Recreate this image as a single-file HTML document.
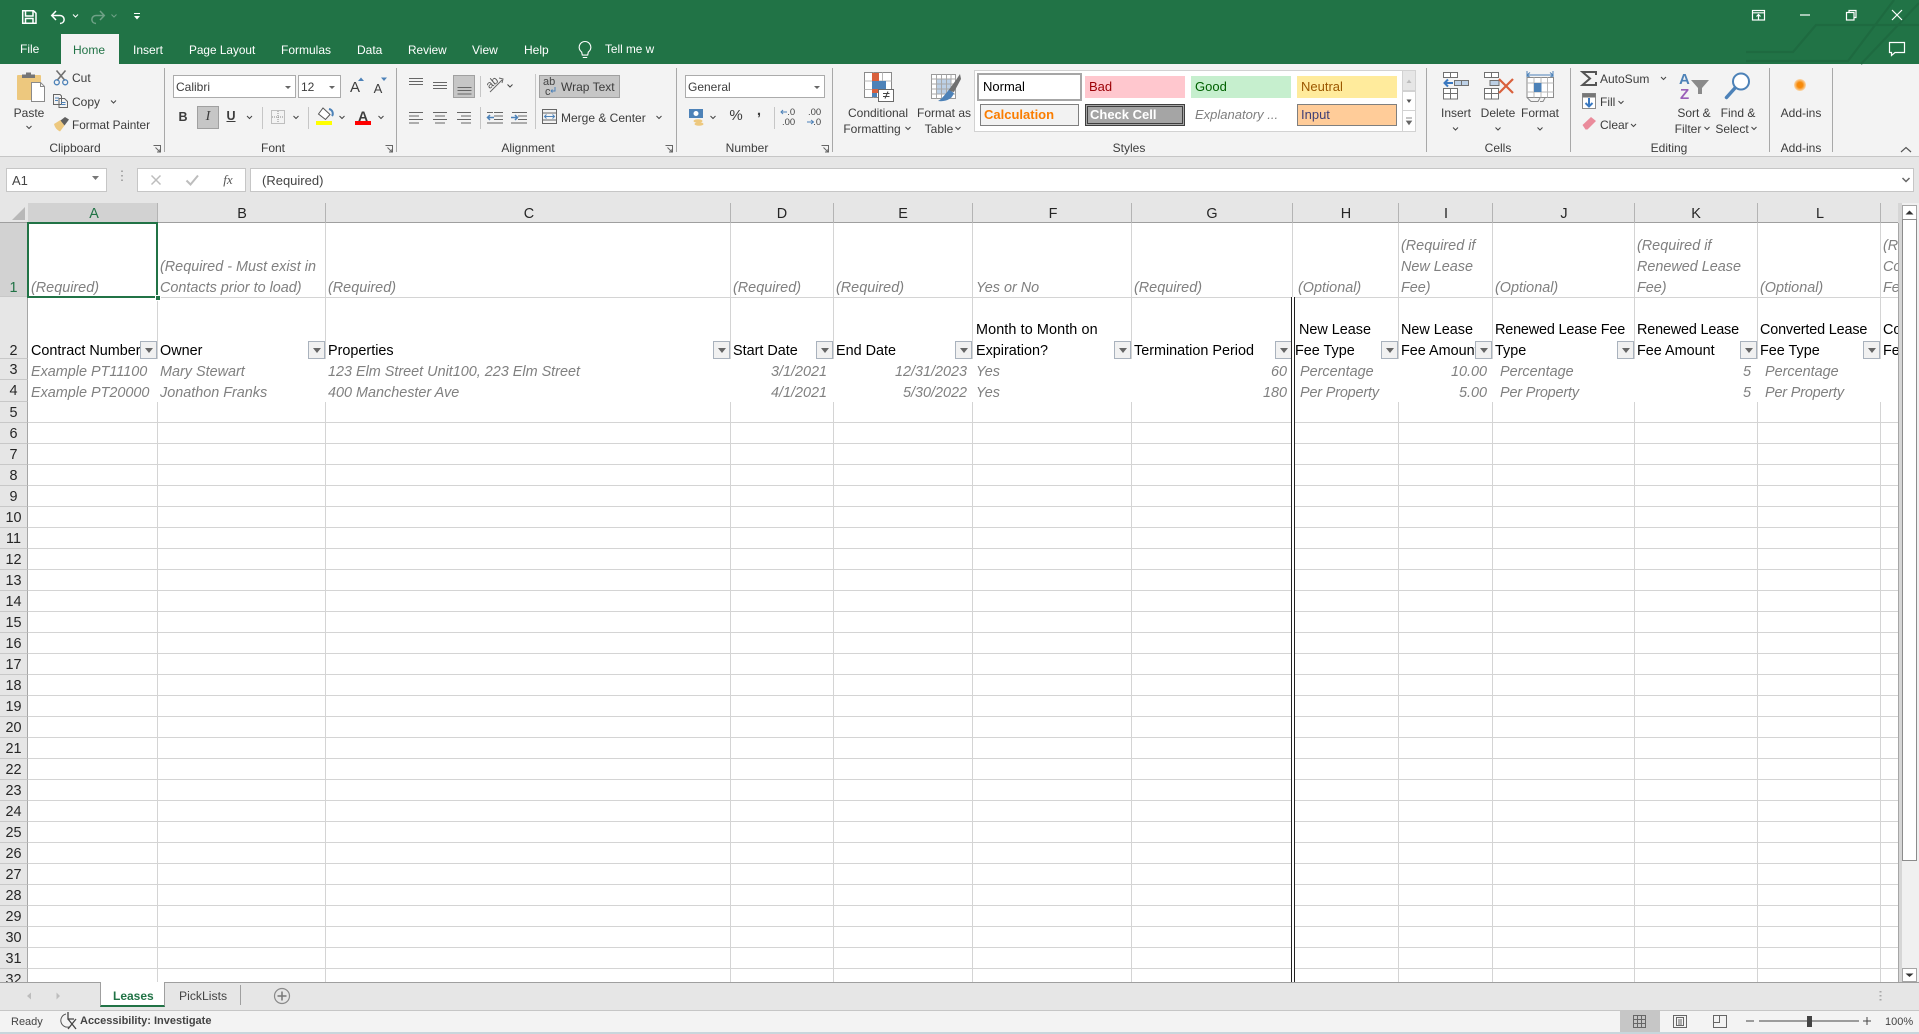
<!DOCTYPE html>
<html><head><meta charset="utf-8"><title>Leases</title>
<style>
html,body{margin:0;padding:0;width:1919px;height:1034px;overflow:hidden;background:#fff;font-family:"Liberation Sans",sans-serif}
div{position:absolute;box-sizing:border-box}
.t{position:absolute;white-space:nowrap;font-size:12px;line-height:16px;color:#3c3c3c}
.cc{transform:translateX(-50%)}
.w{color:#fff}
.g{position:absolute;white-space:nowrap;font-size:14.4px;line-height:20px;color:#808080;font-style:italic}
.k{position:absolute;white-space:nowrap;font-size:14.4px;line-height:20px;color:#000}
.n{letter-spacing:-.16px}
.ch{position:absolute;top:203px;margin-left:1px;height:20px;font-size:14.4px;line-height:20px;color:#262626;transform:translateX(-50%)}
.rn{left:0;width:28px;text-align:center;font-size:14.4px;line-height:23px;height:21px;color:#262626;background:#e6e6e6;border-bottom:1px solid #c8c8c8;border-right:1px solid #a6a6a6;overflow:hidden}
.v{width:1px;background:#d4d4d4;top:223px;height:759px}
.hs{width:1px;background:#b4b4b4;top:203px;height:20px}
.f{width:17px;height:18px;top:341px;background:#f1f1f1;border:1px solid #a9b2bd}
.f:after{content:"";position:absolute;left:4px;top:6px;border:4px solid transparent;border-top:5px solid #666;border-bottom:0}
.sep{width:1px;background:#a8a8a8;top:68px;height:84px}
.st{font-size:13px;line-height:22px;white-space:nowrap;padding-left:7px}
</style></head><body>

<!-- title bar -->
<div style="left:0;top:0;width:1919px;height:64px;background:#217346"></div>
<div style="left:61px;top:34px;width:58px;height:30px;background:#f3f3f3"></div>
<span class="t w" style="left:20px;top:41px">File</span>
<span class="t" style="left:73px;top:42px;color:#217346">Home</span>
<span class="t w" style="left:133px;top:42px">Insert</span>
<span class="t w" style="left:189px;top:42px;font-size:11.8px">Page Layout</span>
<span class="t w" style="left:281px;top:42px">Formulas</span>
<span class="t w" style="left:357px;top:42px">Data</span>
<span class="t w" style="left:408px;top:42px;font-size:11.8px">Review</span>
<span class="t w" style="left:472px;top:42px">View</span>
<span class="t w" style="left:524px;top:42px">Help</span>
<span class="t w" style="left:605px;top:41px;font-size:11.8px">Tell me w</span>

<!-- ribbon -->
<div style="left:0;top:64px;width:1919px;height:93px;background:#f3f3f3;border-bottom:1px solid #c6c6c6"></div>
<div class="sep" style="left:164px"></div><div class="sep" style="left:396px"></div><div class="sep" style="left:676px"></div><div class="sep" style="left:832px"></div><div class="sep" style="left:1426px"></div><div class="sep" style="left:1570px"></div><div class="sep" style="left:1769px"></div><div class="sep" style="left:1832px"></div>
<span class="t cc" style="left:75px;top:140px">Clipboard</span>
<span class="t cc" style="left:273px;top:140px">Font</span>
<span class="t cc" style="left:528px;top:140px">Alignment</span>
<span class="t cc" style="left:747px;top:140px">Number</span>
<span class="t cc" style="left:1129px;top:140px">Styles</span>
<span class="t cc" style="left:1498px;top:140px">Cells</span>
<span class="t cc" style="left:1669px;top:140px">Editing</span>
<span class="t cc" style="left:1801px;top:140px">Add-ins</span>

<span class="t cc" style="left:29px;top:105px">Paste</span>
<span class="t" style="left:72px;top:70px">Cut</span>
<span class="t" style="left:72px;top:94px">Copy</span>
<span class="t" style="left:72px;top:117px;font-size:11.8px">Format Painter</span>

<div style="left:173px;top:75px;width:123px;height:23px;background:#fff;border:1px solid #ababab"></div>
<span class="t" style="left:176px;top:79px">Calibri</span>
<div style="left:298px;top:75px;width:43px;height:23px;background:#fff;border:1px solid #ababab"></div>
<span class="t" style="left:301px;top:79px">12</span>
<div style="left:197px;top:106px;width:22px;height:23px;background:#c6c6c6;border:1px solid #a0a0a0"></div>
<span class="t cc" style="left:183px;top:109px;font-weight:bold;font-size:12.5px">B</span>
<span class="t cc" style="left:208px;top:109px;font-style:italic;font-family:'Liberation Serif',serif;font-size:14px">I</span>
<span class="t cc" style="left:231px;top:108px;text-decoration:underline;font-weight:bold;font-size:12.5px">U</span>
<span class="t cc" style="left:355px;top:80px;font-size:15px">A</span>
<span class="t cc" style="left:378px;top:81px;font-size:13px">A</span>
<span class="t cc" style="left:363px;top:108px;font-size:14px;font-weight:bold">A</span>

<div style="left:453px;top:75px;width:22px;height:23px;background:#c6c6c6;border:1px solid #a0a0a0"></div>
<div style="left:539px;top:75px;width:81px;height:23px;background:#c6c6c6;border:1px solid #a0a0a0"></div>
<span class="t" style="left:561px;top:79px">Wrap Text</span>
<span class="t" style="left:561px;top:110px;font-size:12px">Merge &amp; Center</span>
<span class="t" style="left:543px;top:77px;font-size:11px;line-height:10px;color:#444">ab</span>
<span class="t" style="left:545px;top:87px;font-size:11px;line-height:10px;color:#444">c</span>

<div style="left:685px;top:75px;width:140px;height:23px;background:#fff;border:1px solid #ababab"></div>
<span class="t" style="left:688px;top:79px">General</span>
<span class="t cc" style="left:736px;top:108px;font-size:15px">%</span>
<span class="t cc" style="left:759px;top:103px;font-size:15px;font-weight:bold">,</span>
<span class="t" style="left:782px;top:108px;font-size:9.5px;line-height:10px;color:#444">&nbsp;&nbsp;.0<br>.00</span>
<span class="t" style="left:808px;top:108px;font-size:9.5px;line-height:10px;color:#444">.00<br>&nbsp;&nbsp;.0</span>

<span class="t cc" style="left:878px;top:105px">Conditional</span>
<span class="t cc" style="left:872px;top:121px">Formatting</span>
<span class="t cc" style="left:944px;top:105px">Format as</span>
<span class="t cc" style="left:939px;top:121px">Table</span>

<!-- styles gallery -->
<div style="left:974px;top:70px;width:442px;height:62px;background:#fff;border:1px solid #d2d2d2"></div>
<div class="st" style="left:977px;top:73px;width:105px;height:28px;border:2px solid #a6a6a6;background:#fff;color:#000;line-height:23px;padding-left:4px">Normal</div>
<div class="st" style="left:1085px;top:76px;width:100px;height:22px;background:#ffc7ce;color:#9c0006;padding-left:4px">Bad</div>
<div class="st" style="left:1191px;top:76px;width:100px;height:22px;background:#c6efce;color:#006100;padding-left:4px">Good</div>
<div class="st" style="left:1297px;top:76px;width:100px;height:22px;background:#ffeb9c;color:#9c5700;padding-left:4px">Neutral</div>
<div class="st" style="left:980px;top:104px;width:99px;height:22px;background:#f2f2f2;border:1px solid #7f7f7f;color:#fa7d00;font-weight:bold;padding-left:3px;line-height:20px">Calculation</div>
<div class="st" style="left:1085px;top:104px;width:100px;height:22px;background:#a5a5a5;border:3px double #3f3f3f;color:#fff;font-weight:bold;padding-left:2px;line-height:16px">Check Cell</div>
<div class="st" style="left:1191px;top:104px;width:100px;height:22px;color:#7f7f7f;font-style:italic;padding-left:4px">Explanatory ...</div>
<div class="st" style="left:1297px;top:104px;width:100px;height:22px;background:#fc9;border:1px solid #7f7f7f;color:#3f3f76;padding-left:3px;line-height:20px">Input</div>
<div style="left:1402px;top:70px;width:14px;height:21px;background:#e6e6e6;border:1px solid #d2d2d2"></div>
<div style="left:1402px;top:91px;width:14px;height:20px;background:#fff;border:1px solid #d2d2d2"></div>
<div style="left:1402px;top:110px;width:14px;height:22px;background:#fff;border:1px solid #d2d2d2"></div>

<span class="t cc" style="left:1456px;top:105px">Insert</span>
<span class="t cc" style="left:1498px;top:105px">Delete</span>
<span class="t cc" style="left:1540px;top:105px">Format</span>
<span class="t" style="left:1600px;top:71px">AutoSum</span>
<span class="t" style="left:1600px;top:94px">Fill</span>
<span class="t" style="left:1600px;top:117px">Clear</span>
<span class="t cc" style="left:1694px;top:105px">Sort &amp;</span>
<span class="t cc" style="left:1688px;top:121px">Filter</span>
<span class="t cc" style="left:1738px;top:105px">Find &amp;</span>
<span class="t cc" style="left:1732px;top:121px">Select</span>
<span class="t cc" style="left:1801px;top:105px">Add-ins</span>

<!-- formula bar -->
<div style="left:0;top:157px;width:1919px;height:46px;background:#e6e6e6"></div>
<div style="left:6px;top:168px;width:101px;height:24px;background:#fff;border:1px solid #c6c6c6"></div>
<span class="t" style="left:12px;top:173px;font-size:13px;color:#444">A1</span>
<div style="left:137px;top:168px;width:109px;height:24px;background:#fff;border:1px solid #c6c6c6"></div>
<div style="left:250px;top:168px;width:1664px;height:24px;background:#fff;border:1px solid #c6c6c6"></div>
<span class="t" style="left:262px;top:173px;font-size:13px;color:#444">(Required)</span>
<span class="t cc" style="left:228px;top:172px;font-family:'Liberation Serif',serif;font-style:italic;font-size:13px;color:#555">fx</span>

<!-- column headers -->
<div style="left:0;top:203px;width:1899px;height:20px;background:#e6e6e6;border-bottom:1px solid #9f9f9f"></div>
<div style="left:28px;top:203px;width:129px;height:20px;background:#d2d2d2;border-bottom:1px solid #9f9f9f"></div>
<div class="hs" style="left:157px"></div><div class="hs" style="left:325px"></div><div class="hs" style="left:730px"></div><div class="hs" style="left:833px"></div><div class="hs" style="left:972px"></div><div class="hs" style="left:1131px"></div><div class="hs" style="left:1292px"></div><div class="hs" style="left:1398px"></div><div class="hs" style="left:1492px"></div><div class="hs" style="left:1634px"></div><div class="hs" style="left:1757px"></div><div class="hs" style="left:1880px"></div>

<!-- grid -->
<div style="left:28px;top:223px;width:1871px;height:759px;background:#fff;overflow:hidden">
<div style="left:0;top:74px;width:1871px;height:1px;background:#d4d4d4"></div>
<div style="left:0;top:179px;width:1871px;height:580px;background:repeating-linear-gradient(to bottom,transparent 0,transparent 20px,#d4d4d4 20px,#d4d4d4 21px)"></div>
</div>
<div class="v" style="left:157px"></div><div class="v" style="left:325px"></div><div class="v" style="left:730px"></div><div class="v" style="left:833px"></div><div class="v" style="left:972px"></div><div class="v" style="left:1131px"></div><div class="v" style="left:1292px"></div><div class="v" style="left:1398px"></div><div class="v" style="left:1492px"></div><div class="v" style="left:1634px"></div><div class="v" style="left:1757px"></div><div class="v" style="left:1880px"></div>
<div style="left:28px;top:359px;width:1871px;height:43px;background:#fff"></div>

<!-- row headers -->
<div class="rn" style="top:223px;height:74px;line-height:20px;padding-top:55px;background:#d2d2d2;color:#217346">1</div>
<div class="rn" style="top:297px;height:62px;line-height:20px;padding-top:44px">2</div>
<div class="rn" style="top:359px">3</div><div class="rn" style="top:380px;height:22px">4</div>
<div class="rn" style="top:402px">5</div><div class="rn" style="top:423px">6</div><div class="rn" style="top:444px">7</div><div class="rn" style="top:465px">8</div><div class="rn" style="top:486px">9</div><div class="rn" style="top:507px">10</div><div class="rn" style="top:528px">11</div><div class="rn" style="top:549px">12</div><div class="rn" style="top:570px">13</div><div class="rn" style="top:591px">14</div><div class="rn" style="top:612px">15</div><div class="rn" style="top:633px">16</div><div class="rn" style="top:654px">17</div><div class="rn" style="top:675px">18</div><div class="rn" style="top:696px">19</div><div class="rn" style="top:717px">20</div><div class="rn" style="top:738px">21</div><div class="rn" style="top:759px">22</div><div class="rn" style="top:780px">23</div><div class="rn" style="top:801px">24</div><div class="rn" style="top:822px">25</div><div class="rn" style="top:843px">26</div><div class="rn" style="top:864px">27</div><div class="rn" style="top:885px">28</div><div class="rn" style="top:906px">29</div><div class="rn" style="top:927px">30</div><div class="rn" style="top:948px">31</div><div class="rn" style="top:969px;height:13px;border-bottom:0">32</div>

<div style="left:0;top:1px;width:1919px;height:981px">
<span class="ch" style="left:93px;color:#217346">A</span><span class="ch" style="left:241px">B</span><span class="ch" style="left:528px">C</span><span class="ch" style="left:781px">D</span><span class="ch" style="left:902px">E</span><span class="ch" style="left:1052px">F</span><span class="ch" style="left:1211px">G</span><span class="ch" style="left:1345px">H</span><span class="ch" style="left:1445px">I</span><span class="ch" style="left:1563px">J</span><span class="ch" style="left:1695px">K</span><span class="ch" style="left:1819px">L</span>
<!-- row 1 -->
<span class="g" style="left:31px;top:277px">(Required)</span>
<span class="g" style="left:160px;top:256px">(Required - Must exist in</span>
<span class="g" style="left:160px;top:277px">Contacts prior to load)</span>
<span class="g" style="left:328px;top:277px">(Required)</span>
<span class="g" style="left:733px;top:277px">(Required)</span>
<span class="g" style="left:836px;top:277px">(Required)</span>
<span class="g" style="left:976px;top:277px">Yes or No</span>
<span class="g" style="left:1134px;top:277px">(Required)</span>
<span class="g" style="left:1298px;top:277px">(Optional)</span>
<span class="g" style="left:1401px;top:235px">(Required if</span>
<span class="g" style="left:1401px;top:256px">New Lease</span>
<span class="g" style="left:1401px;top:277px">Fee)</span>
<span class="g" style="left:1495px;top:277px">(Optional)</span>
<span class="g" style="left:1637px;top:235px">(Required if</span>
<span class="g" style="left:1637px;top:256px">Renewed Lease</span>
<span class="g" style="left:1637px;top:277px">Fee)</span>
<span class="g" style="left:1760px;top:277px">(Optional)</span>
<span class="g" style="left:1883px;top:235px">(Required if</span>
<span class="g" style="left:1883px;top:256px">Converted Lease</span>
<span class="g" style="left:1883px;top:277px">Fee)</span>

<!-- row 2 -->
<span class="k" style="left:31px;top:340px">Contract Number</span>
<span class="k" style="left:160px;top:340px">Owner</span>
<span class="k" style="left:328px;top:340px">Properties</span>
<span class="k" style="left:733px;top:340px">Start Date</span>
<span class="k" style="left:836px;top:340px">End Date</span>
<span class="k" style="left:976px;top:319px;letter-spacing:.1px">Month to Month on</span>
<span class="k" style="left:976px;top:340px">Expiration?</span>
<span class="k" style="left:1134px;top:340px">Termination Period</span>
<span class="k" style="left:1299px;top:319px">New Lease</span>
<span class="k" style="left:1295px;top:340px">Fee Type</span>
<span class="k" style="left:1401px;top:319px">New Lease</span>
<span class="k" style="left:1401px;top:340px">Fee Amount</span>
<span class="k n" style="left:1495px;top:319px">Renewed Lease Fee</span>
<span class="k" style="left:1495px;top:340px">Type</span>
<span class="k n" style="left:1637px;top:319px">Renewed Lease</span>
<span class="k" style="left:1637px;top:340px">Fee Amount</span>
<span class="k n" style="left:1760px;top:319px">Converted Lease</span>
<span class="k" style="left:1760px;top:340px">Fee Type</span>
<span class="k" style="left:1883px;top:319px">Converted Lease</span>
<span class="k" style="left:1883px;top:340px">Fee Amount</span>

<!-- rows 3,4 -->
<span class="g" style="left:31px;top:361px">Example PT11100</span>
<span class="g" style="left:160px;top:361px">Mary Stewart</span>
<span class="g" style="left:328px;top:361px">123 Elm Street Unit100, 223 Elm Street</span>
<span class="g" style="right:1092px;top:361px">3/1/2021</span>
<span class="g" style="right:952px;top:361px">12/31/2023</span>
<span class="g" style="left:976px;top:361px">Yes</span>
<span class="g" style="right:632px;top:361px">60</span>
<span class="g" style="left:1300px;top:361px">Percentage</span>
<span class="g" style="right:432px;top:361px">10.00</span>
<span class="g" style="left:1500px;top:361px">Percentage</span>
<span class="g" style="right:168px;top:361px">5</span>
<span class="g" style="left:1765px;top:361px">Percentage</span>

<span class="g" style="left:31px;top:382px">Example PT20000</span>
<span class="g" style="left:160px;top:382px">Jonathon Franks</span>
<span class="g" style="left:328px;top:382px">400 Manchester Ave</span>
<span class="g" style="right:1092px;top:382px">4/1/2021</span>
<span class="g" style="right:952px;top:382px">5/30/2022</span>
<span class="g" style="left:976px;top:382px">Yes</span>
<span class="g" style="right:632px;top:382px">180</span>
<span class="g n" style="left:1300px;top:382px">Per Property</span>
<span class="g" style="right:432px;top:382px">5.00</span>
<span class="g n" style="left:1500px;top:382px">Per Property</span>
<span class="g" style="right:168px;top:382px">5</span>
<span class="g n" style="left:1765px;top:382px">Per Property</span>
</div>

<!-- filter buttons -->
<div class="f" style="left:140px"></div><div class="f" style="left:308px"></div><div class="f" style="left:713px"></div><div class="f" style="left:816px"></div><div class="f" style="left:955px"></div><div class="f" style="left:1114px"></div><div class="f" style="left:1275px"></div><div class="f" style="left:1381px"></div><div class="f" style="left:1475px"></div><div class="f" style="left:1617px"></div><div class="f" style="left:1740px"></div><div class="f" style="left:1863px"></div>

<!-- freeze line -->
<div style="left:1291px;top:297px;width:4px;height:685px;border-left:1px solid #222;border-right:1px solid #222;background:#fff"></div>

<!-- selection -->
<div style="left:27px;top:222px;width:131px;height:76px;border:2px solid #217346"></div>
<div style="left:155px;top:295px;width:6px;height:6px;background:#217346;border:1px solid #fff"></div>

<!-- scrollbar -->
<div style="left:1898px;top:192px;width:21px;height:11px;background:#e6e6e6"></div>
<div style="left:1898px;top:203px;width:21px;height:779px;background:#f0f0f0;border-left:4px solid #d6d6d6"></div>
<div style="left:1898px;top:223px;width:1px;height:759px;background:#a6a6a6"></div>
<div style="left:1902px;top:205px;width:15px;height:15px;background:#fff;border:1px solid #a6a6a6"></div>
<div style="left:1902px;top:219px;width:15px;height:642px;background:#fff;border:1px solid #8c8c8c"></div>
<div style="left:1902px;top:968px;width:15px;height:14px;background:#fff;border:1px solid #a6a6a6"></div>

<!-- sheet tabs -->
<div style="left:0;top:982px;width:1919px;height:28px;background:#e6e6e6;border-top:1px solid #9f9f9f"></div>
<div style="left:100px;top:982px;width:65px;height:25px;background:#fff;border-left:1px solid #9f9f9f;border-right:1px solid #9f9f9f;border-bottom:2px solid #217346"></div>
<span class="t" style="left:113px;top:988px;font-weight:bold;color:#217346;font-size:12px">Leases</span>
<span class="t" style="left:179px;top:988px;font-size:12.2px;color:#444">PickLists</span>
<div style="left:240px;top:985px;width:1px;height:20px;background:#9f9f9f"></div>

<!-- status bar -->
<div style="left:0;top:1010px;width:1919px;height:22px;background:#f3f3f3;border-top:1px solid #c6c6c6"></div>
<div style="left:0;top:1032px;width:1919px;height:2px;background:#c8d6dc"></div>
<span class="t" style="left:11px;top:1014px;font-size:11px;color:#444">Ready</span>
<span class="t" style="left:80px;top:1013px;font-size:11px;font-weight:bold;color:#444">Accessibility: Investigate</span>
<div style="left:1620px;top:1011px;width:40px;height:21px;background:#c6c6c6"></div>
<span class="t" style="left:1885px;top:1014px;font-size:11px;color:#444">100%</span>

<!-- icons -->
<svg width="1919" height="1034" viewBox="0 0 1919 1034" style="position:absolute;left:0;top:0" fill="none">
<!-- circuit -->
<g stroke="#1e6a40" stroke-width="2.2">
<path d="M1746 52H1793L1816 25H1919"/><path d="M1746 61H1848L1894 0"/><path d="M1861 64L1919 3"/>
</g>
<!-- QAT -->
<g stroke="#fff" stroke-width="1.5">
<path d="M22.7 10.7H33.5L36 13.2V23.3H22.7Z"/><path d="M25.5 11V16H33V11M25.5 23V18.5H33V23"/>
<path d="M56 11L51.7 15.5L56 20M52 15.5H60C65 15.5 66 23 60 23.5"/>
<path d="M73 14.5l2.5 2.5l2.5-2.5" stroke-width="1"/>
<path d="M100 11L104.3 15.5L100 20M104 15.5H96C91 15.5 90 23 96 23.5" stroke="#6fa287"/>
<path d="M111.5 14.5l2.5 2.5l2.5-2.5" stroke="#6fa287" stroke-width="1"/>
<path d="M134 13.5H140" stroke-width="1"/>
</g>
<path d="M134 16H140L137 19.5Z" fill="#fff"/>
<!-- bulb -->
<path d="M585 38.5a5.8 5.8 0 0 1 3.3 10.6l-.6 3h-5.4l-.6-3A5.8 5.8 0 0 1 585 38.5ZM582.8 54.5H587.2" stroke="#fff" stroke-width="1.1" transform="translate(0,3)"/>
<!-- window controls -->
<g stroke="#fff" stroke-width="1.2">
<rect x="1752.5" y="10.5" width="12" height="9.5"/><path d="M1752.5 12.8H1764.5M1758.5 20V14.5M1756.5 16.5l2-2l2 2"/>
<path d="M1800 15H1810"/>
<rect x="1846.5" y="12.5" width="7.5" height="7.5"/><path d="M1849 12.5V10.5H1856V17.5H1854"/>
<path d="M1892 10L1902 20M1902 10L1892 20"/>
<path d="M1889.5 42.5H1904.5V52.5H1895L1891.5 55.5V52.5H1889.5Z"/>
</g>
<!-- paste -->
<rect x="17" y="75" width="24" height="25" rx="1" fill="#edc87e"/>
<path d="M22 78V74.5H26V72.5H31V74.5H35V78Z" fill="#767676"/>
<path d="M31.5 82.5H40.5L44.5 86.5V101.5H31.5Z" fill="#fff" stroke="#8a8a8a"/>
<path d="M40.5 82.5V86.5H44.5" stroke="#8a8a8a"/>
<path d="M26.5 126l2.5 2.5l2.5-2.5" stroke="#444"/>
<!-- scissors -->
<path d="M56.5 70.5L65 80.5M65.5 70.5L57 80.5" stroke="#707070" stroke-width="1.6"/>
<circle cx="56.8" cy="82.3" r="2.5" stroke="#4d82b8" stroke-width="1.3"/><circle cx="65.2" cy="82.3" r="2.5" stroke="#4d82b8" stroke-width="1.3"/>
<!-- copy -->
<path d="M53.5 94.5H60L61.5 96V104.5H53.5ZM59 98.5H64.5L67.5 101.5V107.5H59Z" fill="#f3f3f3" stroke="#666"/>
<path d="M55 98H59M55 100.5H58M61 102.5H65.5M61 104.5H65.5" stroke="#4d82b8"/>
<path d="M111 100.5l2.5 2.5l2.5-2.5" stroke="#444"/>
<!-- format painter -->
<path d="M54 124L60.5 120L64.5 125.5L60 131.5C57 130 55 128 54 124Z" fill="#edc87e"/>
<path d="M60.5 120.5L65 117L69 119.5L64.5 125.5Z" fill="#5f5f5f"/>
<!-- launchers -->
<g stroke="#666"><path d="M153.5 145.5H160.5V152.5M155.5 147.5L160 152M157 152H160V149"/><path d="M385.5 145.5H392.5V152.5M387.5 147.5L392 152M389 152H392V149"/><path d="M665.5 145.5H672.5V152.5M667.5 147.5L672 152M669 152H672V149"/><path d="M821.5 145.5H828.5V152.5M823.5 147.5L828 152M825 152H828V149"/></g>
<!-- combo arrows -->
<path d="M285 86H291L288 89Z M329 86H335L332 89Z M814 86H820L817 89Z" fill="#666"/>
<path d="M358 81L361 77.500L364 81Z" fill="#4d82b8"/><path d="M381 77.500H387L384 81Z" fill="#4d82b8"/>
<!-- chevrons -->
<g stroke="#444"><path d="M247 116l2.5 2.5l2.5-2.5M293.500 116l2.500 2.500l2.500-2.500M339.500 116l2.500 2.500l2.500-2.500M378.500 116l2.500 2.500l2.500-2.500M507.500 84.500l2.500 2.500l2.500-2.500M656.500 116l2.500 2.500l2.500-2.500M710.500 116l2.500 2.500l2.500-2.500M905.500 127l2.500 2.500l2.500-2.500M955.500 127l2.500 2.500l2.500-2.500M1453 127.500l2.500 2.500l2.500-2.500M1495.500 127.500l2.500 2.500l2.500-2.500M1537.500 127.500l2.500 2.500l2.500-2.500M1661 77l2.500 2.500l2.500-2.500M1618.500 101l2.500 2.500l2.500-2.500M1631 124l2.500 2.500l2.500-2.500M1704.500 127l2.500 2.500l2.500-2.500M1751.500 127l2.500 2.500l2.500-2.500"/></g>
<!-- sep small -->
<path d="M262.500 107V129M308.500 107V129M480.500 76V97M480.500 107V129M535.500 74V129M774.500 107V129" stroke="#c6c6c6"/>
<!-- borders icon -->
<rect x="271.500" y="110.500" width="13" height="13" stroke="#888" stroke-dasharray="1 1"/><path d="M278 111V123M272 117H284" stroke="#888" stroke-dasharray="1 1"/>
<!-- fill colour -->
<path d="M323 108L330 114.500L325.500 119.500L318.500 114Z" stroke="#555" fill="#fff"/><path d="M329 109C333 110 333.500 114 332 116" stroke="#4d82b8" stroke-width="2"/>
<rect x="316" y="121" width="16" height="4" fill="#ffff00"/>
<rect x="355" y="121" width="16" height="4" fill="#ff0000"/>
<!-- alignment -->
<g stroke="#666">
<path d="M409 78.500H423M409 81.500H423M409 84.500H423"/>
<path d="M433 82.500H447M433 85.500H447M433 88.500H447"/>
<path d="M457.500 87.500H471.500M457.500 90.500H471.500M457.500 94H471.500"/>
<path d="M409 112.500H423M409 116H419M409 119.500H423M409 123H419"/>
<path d="M433 112.500H447M435 116H445M433 119.500H447M435 123H445"/>
<path d="M457 112.500H471M461 116H471M457 119.500H471M461 123H471"/>
<path d="M494 112.500H503M494 116H503M494 119.500H503M487 123H503"/>
<path d="M518 112.500H527M518 116H527M518 119.500H527M511 123H527"/>
<path d="M512 112.500H518"/><path d="M487 112.500H493"/>
<rect x="542.500" y="109.500" width="14" height="14" /><path d="M542.500 113H556.500M542.500 120H556.500"/>
</g>
<path d="M544.500 116.500H554.500M546.500 114.500L544.500 116.500L546.500 118.500M552.500 114.500L554.500 116.500L552.500 118.500" stroke="#4d82b8"/>
<path d="M494 117.500H487.500M490 115L487.500 117.500L490 120" stroke="#4d82b8" stroke-width="1.500"/>
<path d="M511 117.500H517M515 115L517.500 117.500L515 120" stroke="#4d82b8" stroke-width="1.500"/>
<!-- orientation -->
<text x="487" y="88" font-family="Liberation Sans" font-size="11" fill="#555" transform="rotate(-40 490 85)">ab</text>
<path d="M490 92L502 80M499 78L503 79L502 83" stroke="#666"/>
<!-- wrap arrow -->
<path d="M551 91H555V87M551 91l1.500-1.500M551 91l1.500 1.500" stroke="#4d82b8"/>
<!-- currency -->
<rect x="689" y="109" width="14" height="9" fill="#4d82b8"/><circle cx="696" cy="113.500" r="2.500" fill="#fff"/>
<ellipse cx="698" cy="121" rx="4.500" ry="1.800" fill="#edc87e"/><ellipse cx="699" cy="124" rx="4.500" ry="1.800" fill="#edc87e"/>
<!-- decimals -->
<path d="M787 112H781M783 110L781 112L783 114" stroke="#4d82b8"/>
<path d="M807 122H813M811 120L813.500 122L811 124" stroke="#4d82b8"/>
<!-- CF icon -->
<rect x="864.500" y="72.500" width="27" height="25" fill="#fff" stroke="#8a8a8a"/>
<path d="M864.500 81H891.500M864.500 89.500H891.500M873.500 72.500V97.500M882.500 72.500V97.500" stroke="#b8b8b8"/>
<rect x="872" y="73" width="7" height="8" fill="#d9603c"/><rect x="872" y="81" width="14" height="8" fill="#4d82b8"/><rect x="872" y="89" width="9" height="4" fill="#d9603c"/><rect x="872" y="93" width="5" height="4" fill="#4d82b8"/>
<rect x="878.500" y="89.500" width="15" height="12" fill="#fff" stroke="#6a6a6a"/>
<path d="M883 93.500H889.500M883 96.500H889.500M888 91.500L885 98.500" stroke="#444"/>
<!-- Format as table icon -->
<rect x="931.500" y="74.500" width="24" height="24" fill="#fff" stroke="#9a9a9a"/>
<rect x="936" y="79" width="15" height="15" fill="#bcd0e6"/>
<path d="M931.500 79H955.500M931.500 84H955.500M931.500 89H955.500M931.500 94H955.500M936.500 74.500V98.500M941.500 74.500V98.500M946.500 74.500V98.500M951 74.500V98.500" stroke="#a8a8a8"/>
<path d="M948 91L956 80L960 74L961 79L954 92Z" fill="#707070"/>
<path d="M949 90L954 93C952 99 946 102 938 101C942 99 945 94 949 90Z" fill="#4d82b8"/>
<!-- gallery arrows -->
<path d="M1406.500 83L1409 79.500L1411.500 83Z" fill="#bdbdbd"/><path d="M1406.500 99.500H1411.500L1409 103Z" fill="#555"/><path d="M1406 118H1412M1406.500 121H1411.500L1409 124.500Z" stroke="#666" fill="#666" stroke-width=".8"/>
<!-- Insert cells -->
<g stroke="#707070" fill="#fff">
<rect x="1443.500" y="72.500" width="14" height="5"/><path d="M1450.500 72.500V77.500"/>
<rect x="1443.500" y="88.500" width="14" height="10.500"/><path d="M1450.500 88.500V99M1443.500 93.500H1457.500"/>
<rect x="1454.500" y="80.500" width="14" height="5" fill="#bcd0e6"/><path d="M1461.500 80.500V85.500"/>
<rect x="1484.500" y="72.500" width="14" height="5"/><path d="M1491.500 72.500V77.500"/>
<rect x="1484.500" y="88.500" width="14" height="10.500"/><path d="M1491.500 88.500V99M1484.500 93.500H1498.500"/>
<rect x="1490" y="80.500" width="9" height="5" fill="#bcd0e6"/>
</g>
<path d="M1453 83H1444.500M1448 79.500L1444.500 83L1448 86.500" stroke="#3a78c0" stroke-width="2"/>
<path d="M1499 79L1513 93M1513 79L1499 93" stroke="#d9603c" stroke-width="2.200"/>
<!-- Format cells -->
<path d="M1527 75H1553M1530 72.500L1527 75L1530 77.500M1550 72.500L1553 75L1550 77.500M1527 71V79M1553 71V79" stroke="#4d82b8"/>
<rect x="1527" y="77.500" width="26.500" height="20" fill="#fff" stroke="#8a8a8a"/>
<path d="M1527 83H1553.500M1527 92H1553.500M1534 77.500V97.500M1541 77.500V97.500M1547.500 77.500V97.500" stroke="#b8b8b8"/>
<rect x="1534" y="83" width="7.500" height="9" fill="#4d82b8"/>
<path d="M1527 97.500L1531 101.500H1538L1540 98M1540 101.500H1543L1545 98" stroke="#8a8a8a"/>
<!-- Sigma -->
<path d="M1596 75V72H1582.500L1590 78.500L1582.500 85H1596V82" stroke="#555" stroke-width="2"/>
<!-- Fill -->
<rect x="1582.500" y="93.500" width="13" height="15" fill="#fff" stroke="#8a8a8a"/><rect x="1582.500" y="93.500" width="13" height="4" fill="#777"/>
<path d="M1589 98V106M1585.500 103L1589 106.500L1592.500 103" stroke="#3a78c0" stroke-width="2"/>
<!-- Clear -->
<path d="M1582.500 125L1591 117L1596 121L1587.500 129.500H1585.500Z" fill="#ea8b9b"/>
<!-- Sort filter -->
<path d="M1691 80H1709L1702 88V94H1698V88Z" fill="#8a8a8a"/>
<text x="1679" y="84" font-family="Liberation Sans" font-size="15" font-weight="bold" fill="#4d82b8">A</text>
<text x="1680" y="99" font-family="Liberation Sans" font-size="15" font-weight="bold" fill="#9a5fb8">Z</text>
<!-- Find -->
<circle cx="1741" cy="81.500" r="8" fill="#fff" stroke="#4d82b8" stroke-width="2"/><path d="M1735 88L1726.500 97.500" stroke="#4d82b8" stroke-width="3.500" stroke-linecap="round"/>
<!-- addins -->
<defs><radialGradient id="o"><stop offset="45%" stop-color="#f78a09"/><stop offset="100%" stop-color="#fbd9ae"/></radialGradient></defs>
<circle cx="1800" cy="85" r="6" fill="url(#o)"/>
<path d="M1901 152L1906 147.500L1911 152" stroke="#555" stroke-width="1.200"/>
<!-- formula bar -->
<path d="M92 176H99L95.500 180Z" fill="#777"/>
<path d="M122 170.500v1.500M122 175v1.500M122 179.500v1.500" stroke="#a8a8a8" stroke-width="2"/>
<path d="M151.500 175.500L160.500 184.500M160.500 175.500L151.500 184.500" stroke="#bdbdbd" stroke-width="1.500"/>
<path d="M186.500 180.500L190.500 184.500L198 175.500" stroke="#bdbdbd" stroke-width="2"/>
<path d="M1902.500 178l3.500 3.500l3.500-3.500" stroke="#666" stroke-width="1.500"/>
<!-- corner -->
<path d="M25 207V220H12Z" fill="#b8b8b8"/>
<!-- scroll arrows -->
<path d="M1905.500 214.500L1909.500 210.500L1913.500 214.500Z" fill="#333"/><path d="M1905.500 973.500H1913.500L1909.500 977Z" fill="#333"/>
<!-- sheet nav -->
<path d="M31 992.500L27 996L31 999.500Z" fill="#bdbdbd"/><path d="M56.500 992.500L60 996L56.500 999.500Z" fill="#bdbdbd"/>
<circle cx="282" cy="996" r="7.500" stroke="#8a8a8a" stroke-width="1.200"/><path d="M282 991.500V1000.500M277.500 996H286.500" stroke="#777" stroke-width="1.500"/>
<path d="M1880.500 991v1.500M1880.500 995v1.500M1880.500 999v1.500" stroke="#a8a8a8" stroke-width="2"/>
<!-- accessibility -->
<path d="M66 1014A6.500 6.500 0 1 0 69 1027" stroke="#555"/><path d="M68 1012V1019H74M68 1019L76 1029M76 1019L68 1029" stroke="#444" stroke-width="1.300"/>
<!-- view icons -->
<g stroke="#666">
<rect x="1633.500" y="1015.500" width="12" height="12"/><path d="M1637.500 1015.500V1027.500M1641.500 1015.500V1027.500M1633.500 1019.500H1645.500M1633.500 1023.500H1645.500"/>
<rect x="1673.500" y="1015.500" width="13" height="12"/><rect x="1676.500" y="1017.500" width="7" height="8"/><path d="M1678 1020H1682M1678 1022H1682M1678 1024H1682"/>
<rect x="1713.500" y="1015.500" width="13" height="12"/><path d="M1713.500 1022.500H1719.500V1015.500"/>
</g>
<path d="M1746 1021H1754M1759 1021H1859M1863 1021H1871M1867 1017V1025" stroke="#444"/>
<rect x="1807" y="1016" width="5" height="11" fill="#444"/>
</svg>
</body></html>
